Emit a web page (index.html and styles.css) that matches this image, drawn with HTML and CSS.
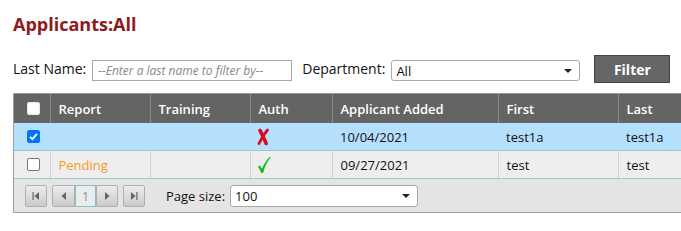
FILE: index.html
```html
<!DOCTYPE html>
<html>
<head>
<meta charset="utf-8">
<link rel="stylesheet" href="styles.css">
</head>
<body>
<div class="page">
  <h1 class="title">Applicants:All</h1>
  <div class="filters">
    <span class="lbl">Last Name:</span>
    <div class="textbox">--Enter a last name to filter by--</div>
    <span class="lbl dept">Department:</span>
    <div class="dropdown dept-dd"><span>All</span><span class="arrow"></span></div>
    <div class="btn">Filter</div>
  </div>
  <div class="grid">
    <table class="tbl">
      <colgroup>
        <col class="c0"><col class="c1"><col class="c2"><col class="c3"><col class="c4"><col class="c5"><col class="c6">
      </colgroup>
      <thead>
        <tr>
          <th class="chk"><span class="cb cb-head"></span></th>
          <th>Report</th>
          <th>Training</th>
          <th>Auth</th>
          <th>Applicant Added</th>
          <th>First</th>
          <th>Last</th>
        </tr>
      </thead>
      <tbody>
        <tr class="sel">
          <td class="chk"><span class="cb cb-on"><svg viewBox="0 0 13 13" width="13" height="13"><path d="M3 6.8 L5.4 9.2 L10 3.8" fill="none" stroke="#fff" stroke-width="1.9"/></svg></span></td>
          <td></td>
          <td></td>
          <td class="icon"><svg width="14" height="18" viewBox="0 0 14 18"><path d="M4 2.5 C6 6 8 10.5 10.2 15.5" fill="none" stroke="#dc0a1e" stroke-width="3.6" stroke-linecap="round"/><path d="M11.5 2 C8.5 5.5 5.5 10 3 15.5" fill="none" stroke="#dc0a1e" stroke-width="2.8" stroke-linecap="round"/></svg></td>
          <td>10/04/2021</td>
          <td>test1a</td>
          <td>test1a</td>
        </tr>
        <tr class="alt">
          <td class="chk"><span class="cb"></span></td>
          <td class="pending">Pending</td>
          <td></td>
          <td class="icon"><svg width="14" height="18" viewBox="0 0 14 18"><path d="M1 10.5 L2.8 9.4 C3.6 10.6 4.4 11.8 5 12.8 C6.8 8.4 9.2 4.4 12.8 0.8 L13.6 1.6 C10.4 5.4 7.9 10.2 6.2 16.8 L4.2 17 C3.4 14.8 2.4 12.6 1 10.5 Z" fill="#16b81c"/></svg></td>
          <td>09/27/2021</td>
          <td>test</td>
          <td>test</td>
        </tr>
      </tbody>
    </table>
    <div class="pager">
      <div class="pbtn"><svg width="10" height="10" viewBox="0 0 10 10"><rect x="1.5" y="1" width="1.2" height="8" fill="#666"/><path d="M8 1 L3.5 5 L8 9 Z" fill="#666"/></svg></div>
      <div class="pgroup">
        <div class="pbtn pprev"><svg width="10" height="10" viewBox="0 0 10 10"><path d="M7 1 L2.5 5 L7 9 Z" fill="#666"/></svg></div>
        <div class="pnum">1</div>
        <div class="pbtn pnext"><svg width="10" height="10" viewBox="0 0 10 10"><path d="M3 1 L7.5 5 L3 9 Z" fill="#666"/></svg></div>
      </div>
      <div class="pbtn"><svg width="10" height="10" viewBox="0 0 10 10"><path d="M2 1 L6.5 5 L2 9 Z" fill="#666"/><rect x="7.3" y="1" width="1.2" height="8" fill="#666"/></svg></div>
      <span class="psize">Page size:</span>
      <div class="dropdown size-dd"><span>100</span><span class="arrow"></span></div>
    </div>
  </div>
</div>
</body>
</html>
```
FILE: styles.css
```css
html, body {
  margin: 0;
  padding: 0;
  background: #fff;
  overflow: hidden;
}
body {
  font-family: "Open Sans", "Liberation Sans", sans-serif;
  font-size: 13px;
  color: #111;
}
.page {
  padding: 12px 0 0 13px;
  width: 740px;
}
.title {
  margin: 0;
  font-size: 18px;
  font-weight: bold;
  color: #8e1b1b;
  line-height: 24px;
  height: 24px;
}
.filters {
  display: flex;
  align-items: center;
  margin-top: 19px;
  height: 28px;
}
.lbl {
  font-size: 14px;
  line-height: 18px;
  margin-right: 6px;
}
.dept {
  margin-left: 10px;
}
.textbox {
  box-sizing: border-box;
  width: 200px;
  height: 21px;
  border: 1px solid #a9a9a9;
  font-style: italic;
  color: #888;
  font-size: 12px;
  line-height: 19px;
  padding-left: 5px;
  margin-top: 3px;
}
.dropdown {
  box-sizing: border-box;
  display: flex;
  align-items: center;
  justify-content: space-between;
  height: 21px;
  border: 1px solid #a9a9a9;
  border-radius: 3px;
  background: #fff;
  padding: 0 7px 0 4px;
  font-size: 13px;
  color: #111;
}
.dept-dd {
  width: 189px;
  margin-top: 3px;
}
.arrow {
  width: 0;
  height: 0;
  border-left: 4px solid transparent;
  border-right: 4px solid transparent;
  border-top: 4px solid #222;
}
.btn {
  box-sizing: border-box;
  margin-left: 14px;
  width: 76px;
  height: 28px;
  background: #666;
  border: 1px solid #444;
  color: #fff;
  font-weight: bold;
  font-size: 14px;
  display: flex;
  align-items: center;
  justify-content: center;
}
.grid {
  margin-top: 10px;
  border-left: 1px solid #a0a0a0;
  width: 727px;
}
.tbl {
  border-collapse: collapse;
  table-layout: fixed;
  width: 726px;
}
.c0 { width: 36px; }
.c1 { width: 100px; }
.c2 { width: 100px; }
.c3 { width: 82px; }
.c4 { width: 166px; }
.c5 { width: 120px; }
.c6 { width: 122px; }
th {
  background: #646464;
  color: #fff;
  font-weight: 600;
  text-align: left;
  height: 29px;
  padding: 0 0 0 8px;
  border-top: 1px solid #9a9a9a;
  border-left: 1px solid #8a8a8a;
  font-size: 13px;
}
th:first-child { border-left: none; }
td {
  height: 27px;
  padding: 0 0 0 8px;
  border-bottom: 1px solid #9cc5d6;
  font-size: 13px;
}
.sel td {
  background: #b4dffd;
  height: 27px;
}
.alt td {
  background: #eeeeee;
  border-left: 1px solid #d2d2d2;
}
.alt td:first-child { border-left: none; }
.chk {
  padding: 0 0 0 13px;
}
.icon { padding-left: 6px; }
.icon svg { display: block; }
.pending { color: #f89c26; }
.cb {
  display: block;
  box-sizing: border-box;
  width: 13px;
  height: 13px;
  border: 1px solid #767676;
  border-radius: 2px;
  background: #fff;
}
.cb-head { border-color: #e8e8e8; }
.cb-on {
  background: #0075ff;
  border-color: #0075ff;
  position: relative;
}
.cb-on svg {
  position: absolute;
  left: -1px;
  top: -1px;
}
.pager {
  display: flex;
  align-items: center;
  height: 33px;
  background: #e4e4e4;
  border-bottom: 1px solid #a0a0a0;
  padding-left: 11px;
}
.pbtn {
  box-sizing: border-box;
  width: 22px;
  height: 22px;
  border: 1px solid #b0b0b0;
  border-radius: 2px;
  background: linear-gradient(#ececec, #cbcbcb);
  display: flex;
  align-items: center;
  justify-content: center;
}
.pgroup {
  display: flex;
  margin-left: 5px;
  margin-right: 5px;
}
.pprev { width: 23px; border-radius: 2px 0 0 2px; }
.pnext { border-radius: 0 2px 2px 0; }
.pnum {
  box-sizing: border-box;
  width: 21px;
  height: 22px;
  border: 1px solid #86c0c8;
  background: #ececec;
  color: #7a9a9c;
  font-size: 13px;
  display: flex;
  align-items: center;
  justify-content: center;
}
.psize {
  font-size: 13px;
  margin-left: 21px;
  margin-right: 5px;
}
.size-dd {
  width: 188px;
  height: 22px;
}
```
